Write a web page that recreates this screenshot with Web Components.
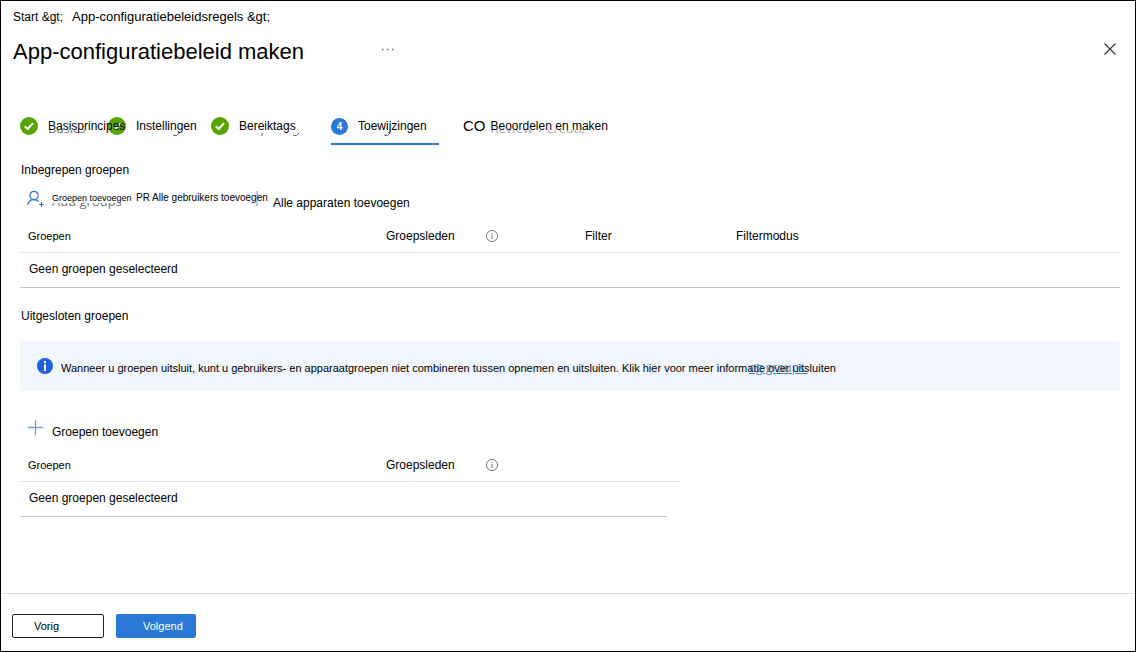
<!DOCTYPE html>
<html lang="nl">
<head>
<meta charset="utf-8">
<title>App-configuratiebeleid maken</title>
<style>
  body { margin: 0; background: #fff; color: #000; font: 12px/16px "Liberation Sans", Arial, sans-serif; }
</style>
</head>
<body>
<policy-page>
  <page-header slot="header" heading="App-configuratiebeleid maken">
    <a href="#start">Start &amp;gt;</a>
    <a href="#regels" class="current">App-configuratiebeleidsregels &amp;gt;</a>
  </page-header>

  <wizard-steps>
    <wizard-step state="done" under="Basics" style="width:88px">Basisprincipes</wizard-step>
    <wizard-step state="done" trace="M37 17q4 2 6-2" style="width:103px">Instellingen</wizard-step>
    <wizard-step state="done" trace="M23 15v3M54 17q4 2 6-2" style="width:120px">Bereiktags</wizard-step>
    <wizard-step state="active" number="4" trace="M26 17q4 2 6-2" style="width:108px">Toewijzingen</wizard-step>
    <wizard-step state="todo" number="CO" under="Review + create">Beoordelen en maken</wizard-step>
  </wizard-steps>

  <group-section heading="Inbegrepen groepen">
    <command-bar>
      <command-button icon="person" size="small" under="Add groups" style="width:109px">Groepen toevoegen</command-button>
      <command-button size="medium" style="width:112px">PR Alle gebruikers toevoegen</command-button>
      <command-button icon="bar">Alle apparaten toevoegen</command-button>
    </command-bar>
    <group-table filters></group-table>
  </group-section>

  <group-section heading="Uitgesloten groepen">
    <info-banner>Wanneer u groepen uitsluit, kunt u gebruikers- en apparaatgroepen niet combineren tussen opnemen en uitsluiten. Klik hier voor meer informatie over uitsluiten</info-banner>
    <command-bar>
      <command-button icon="plus">Groepen toevoegen</command-button>
    </command-bar>
    <group-table></group-table>
  </group-section>

  <wizard-footer slot="footer"></wizard-footer>
</policy-page>

<script>
const define = (name, render) => customElements.define(name, class extends HTMLElement {
  connectedCallback() {
    if (this.shadowRoot) return;
    this.attachShadow({ mode: 'open' }).innerHTML = render(this);
  }
});

const icons = {
  check: `<svg width="18" height="18" viewBox="0 0 18 18" aria-hidden="true"><circle cx="9" cy="9" r="9" fill="#57a300"/><path d="M4.8 9.2 7.7 12 13 6.2" fill="none" stroke="#fff" stroke-width="2"/></svg>`,
  person: `<svg width="18" height="18" viewBox="0 0 18 18" fill="none" stroke="#2a78d6" stroke-width="1.2" aria-hidden="true"><circle cx="7" cy="5.500" r="4.200"/><path d="M.8 15C1.200 11.500 3.700 9.700 7 9.700c1.800 0 3.300.7 4.300 1.800M14.500 12v5M12 14.500h5"/></svg>`,
  plus: `<svg width="18" height="18" viewBox="0 0 18 18" aria-hidden="true"><path d="M8.500 1v15M1 8.500h15" stroke="#6ea3e4" stroke-width="1.300"/></svg>`,
  bar: `<svg width="18" height="18" viewBox="0 0 18 18" aria-hidden="true"><path d="M9 1v15" stroke="#b0ccf2" stroke-width="2"/></svg>`,
  info: `<svg width="14" height="14" viewBox="0 0 14 14" aria-hidden="true"><circle cx="7" cy="7" r="5.600" fill="none" stroke="#777" stroke-width="1"/><path d="M7 6v4M7 4v1" stroke="#777" stroke-width="1"/></svg>`,
  notice: `<svg width="16" height="16" viewBox="0 0 16 16" aria-hidden="true"><circle cx="8" cy="8" r="8" fill="#1f5fe0"/><path d="M8 6.500v6.500M8 3v2.200" stroke="#fff" stroke-width="2"/></svg>`,
  close: `<svg width="14" height="14" viewBox="0 0 14 14" aria-hidden="true"><path d="m1.500 1.500 11 11M12.500 1.500l-11 11" stroke="#333" stroke-width="1.100"/></svg>`,
  more: `<svg width="14" height="4" viewBox="0 0 14 4" aria-hidden="true"><path d="M1 1.500h1.500M6 1.500h1.500M11 1.500h1.500" stroke="#666" stroke-width="1.300"/></svg>`
};

// Earlier caption lying behind a label; only its lower edge stays visible.
const underCss = `
  .label { position: relative; white-space: nowrap; }
  .under { position: absolute; left: 0; top: 2px; z-index: -1; white-space: nowrap;
    font: 13px/16px "Open Sans", sans-serif; color: var(--under, #777); clip-path: inset(10px 0 0 0); }
  .trace { position: absolute; left: 0; top: 0; fill: none; stroke: #555; }`;
const under = el => {
  if (el.hasAttribute('under')) return `<span class="under" aria-hidden="true">${el.getAttribute('under')}</span>`;
  if (el.hasAttribute('trace')) return `<svg class="trace" width="64" height="20" viewBox="0 0 64 20" aria-hidden="true"><path d="${el.getAttribute('trace')}"/></svg>`;
  return '';
};

define('policy-page', () => `
  <style>
    :host { display: flex; flex-direction: column; min-height: 100vh; box-sizing: border-box; border: 1px solid #000; position: relative; z-index: 0; }
    main { flex: 1; padding: 42px 15px 24px 19px; }
  </style>
  <slot name="header"></slot><main><slot></slot></main><slot name="footer"></slot>`);

define('page-header', el => `
  <style>
    :host { display: block; padding: 8px 18px 0 12px; }
    nav { display: flex; gap: 9px; }
    ::slotted(a) { color: #000; text-decoration: none; }
    ::slotted(a.current) { font-size: 13px; }
    .bar { display: flex; align-items: center; margin-top: 12px; }
    h1 { margin: 0; font-size: 22px; line-height: 30px; font-weight: 400; white-space: nowrap; }
    button { display: flex; border: 0; background: none; padding: 0; }
    .more { margin: 0 auto 5px 77px; }
    .close { margin-bottom: 6px; }
  </style>
  <nav aria-label="Kruimelpad"><slot></slot></nav>
  <div class="bar"><h1>${el.getAttribute('heading')}</h1>
    <button class="more" aria-label="Meer">${icons.more}</button>
    <button class="close" aria-label="Sluiten">${icons.close}</button></div>`);

define('wizard-steps', () => `
  <style>:host { display: flex; margin-bottom: 17px; }</style><slot></slot>`);

define('wizard-step', el => {
  const state = el.getAttribute('state');
  const mark = state === 'done' ? icons.check : `<span class="${state}">${el.getAttribute('number')}</span>`;
  return `
  <style>
    :host { display: block; flex: none; }
    :host([state=todo]) { margin-left: 24px; --under: #aaa; }
    a { display: flex; align-items: center; gap: 10px; height: 34px; color: #000; text-decoration: none; }
    :host([state=active]) a { border-bottom: 2px solid #2a78d6; }
    :host([state=todo]) a { gap: 5px; }
    svg { flex: none; }
    .active { width: 17px; line-height: 17px; border-radius: 50%; background: #2a78d6; color: #fff; font-weight: 700; font-size: 10px; text-align: center; }
    .todo { font-size: 15px; }
    ${underCss}
  </style>
  <a href="#stap">${mark}<span class="label"><slot></slot>${under(el)}</span></a>`;
});

define('group-section', el => `
  <style>
    :host { display: block; }
    :host(:last-of-type) { margin-top: 20px; }
    h2 { margin: 0 0 0 1px; font-size: 12px; line-height: 16px; font-weight: 400; }
  </style>
  <h2>${el.getAttribute('heading')}</h2><slot></slot>`);

define('command-bar', () => `
  <style>:host { display: flex; padding: 12px 0 0 7px; height: 29px; }</style><slot></slot>`);

define('command-button', el => `
  <style>
    :host { display: block; flex: none; }
    button { display: flex; gap: 7px; padding: 0; border: 0; background: none; color: #000; font: 12px/16px "Liberation Sans", Arial, sans-serif; text-align: left; }
    svg { flex: none; }
    .label { margin-top: 5px; }
    :host([size]) .label { margin-top: 0; }
    :host([size=small]) button { font-size: 9px; }
    :host([size=medium]) button { font-size: 10px; }
    ${underCss}
    .under { top: 3px; }
  </style>
  <button type="button">${icons[el.getAttribute('icon')] || ''}<span class="label"><slot></slot>${under(el)}</span></button>`);

define('group-table', el => {
  const filters = el.hasAttribute('filters');
  return `
  <style>
    :host { display: block; }
    table { width: ${filters ? '100%' : '60%'}; border-collapse: collapse; table-layout: fixed; }
    th, td { padding: 0 0 0 8px; text-align: left; font-weight: 400; white-space: nowrap; }
    th { height: 33px; border-bottom: 1px solid #e6e6e6; }
    th:first-child { font-size: 11px; }
    td { height: 32px; padding: 0 0 2px 9px; border-bottom: 1px solid #c4c4c4; }
    .head { display: flex; align-items: center; gap: 30px; }
    .c1 { width: 358px; } .c2 { width: 199px; } .c3 { width: 151px; } .tail { width: 14px; }
    td.open { border: 0; padding: 0; }
    th.open { padding: 0; }
  </style>
  <table>
    <colgroup><col class="c1"><col${filters ? ' class="c2"' : ''}>${filters ? '<col class="c3"><col>' : '<col class="tail">'}</colgroup>
    <thead><tr><th>Groepen</th><th><span class="head">Groepsleden ${icons.info}</span></th>${filters ? '<th>Filter</th><th>Filtermodus</th>' : '<th class="open"></th>'}</tr></thead>
    <tbody><tr><td colspan="${filters ? 4 : 2}">Geen groepen geselecteerd</td>${filters ? '' : '<td class="open"></td>'}</tr></tbody>
  </table>`;
});

define('info-banner', () => `
  <style>
    :host { display: flex; align-items: center; gap: 8px; min-height: 50px; box-sizing: border-box; margin: 17px 0 16px; padding: 0 17px; background: #f1f6ff; border-radius: 2px; font-size: 11px; }
    svg { flex: none; }
    p { margin: 4px 0 0; position: relative; }
    a { position: absolute; right: 28px; top: 0; color: #0f5499; font: 12px/15px "Open Sans", sans-serif; opacity: .7; clip-path: inset(4px 0 0 0); }
  </style>
  ${icons.notice}<p><slot></slot><a href="#meer">ng groups.</a></p>`);

define('wizard-footer', () => `
  <style>
    :host { display: flex; gap: 12px; padding: 20px 11px 13px; border-top: 1px solid #dcdcdc; }
    button { box-sizing: border-box; height: 24px; border-radius: 2px; text-align: left; font: 11px/16px "Liberation Sans", Arial, sans-serif; }
    .back { width: 92px; padding: 0 21px; border: 1px solid #222; background: #fff; color: #000; }
    .next { width: 80px; padding: 0 0 0 27px; border: 0; background: #2a78d6; color: #fff; }
  </style>
  <button type="button" class="back">Vorig</button><button type="button" class="next">Volgend</button>`);
</script>
</body>
</html>
